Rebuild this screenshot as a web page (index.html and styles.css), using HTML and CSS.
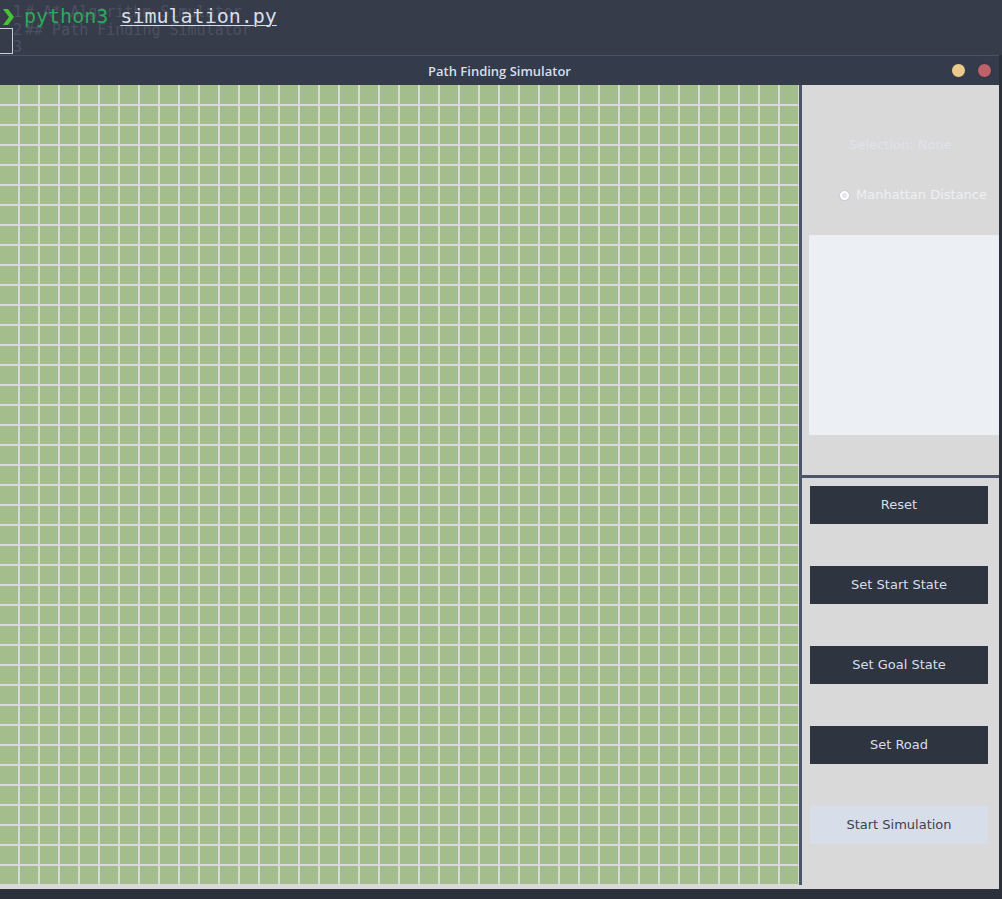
FILE: index.html
```html
<!DOCTYPE html>
<html>
<head>
<meta charset="utf-8">
<title>Path Finding Simulator</title>
<link rel="stylesheet" href="styles.css">
</head>
<body>
<div class="terminal">
  <div class="ghost">
    <div class="gline"><span class="ln">1</span># A* Algorithm Simulator</div>
    <div class="gline"><span class="ln">2</span>## Path Finding Simulator</div>
    <div class="gline"><span class="ln">3</span></div>
  </div>
  <div class="cmd"><svg class="chev" width="24" height="26" viewBox="0 0 24 26"><path d="M3 6 L8 6 L14 14 L8 22 L3 22 L9 14 Z" fill="#49c23a"/></svg><span class="py">python3</span><span class="sp"> </span><span class="file">simulation.py</span></div>
  <div class="cursor"></div>
</div>
<div class="window">
  <div class="titlebar">
    <div></div>
    <div class="title">Path Finding Simulator</div>
    <div class="wbtns"><span class="dot yellow"></span><span class="dot red"></span></div>
  </div>
  <div class="content">
    <div class="grid"></div>
    <div class="side">
      <div class="top-panel">
        <div class="selection">Selection: None</div>
        <div class="radio-row"><span class="radio"><span class="radio-dot"></span></span><span class="radio-label">Manhattan Distance</span></div>
        <div class="listbox"></div>
      </div>
      <div class="bottom-panel">
        <div class="btn">Reset</div>
        <div class="btn">Set Start State</div>
        <div class="btn">Set Goal State</div>
        <div class="btn">Set Road</div>
        <div class="btn btn-light">Start Simulation</div>
      </div>
    </div>
  </div>
</div>
</body>
</html>
```
FILE: styles.css
```css
* { box-sizing: border-box; }
html, body { margin: 0; padding: 0; }
body {
  width: 1002px;
  height: 899px;
  overflow: hidden;
  background: #2b303b;
  font-family: "DejaVu Sans", sans-serif;
}
.terminal {
  position: relative;
  height: 55px;
  background: #363c4a;
}
.ghost {
  position: absolute;
  left: 13px;
  top: 4px;
  font-family: "DejaVu Sans Mono", monospace;
  font-size: 15px;
  line-height: 17.5px;
  color: #4b5162;
}
.gline { height: 17.5px; white-space: pre; }
.ln { display: inline-block; width: 12px; }
.cmd {
  position: relative;
  display: flex;
  align-items: flex-start;
  padding-top: 3px;
  font-family: "DejaVu Sans Mono", monospace;
  font-size: 20px;
  line-height: 26px;
  white-space: pre;
}
.chev { display: block; flex: none; }
.py { color: #2ea85a; }
.file {
  color: #d8dee9;
  text-decoration: underline;
  text-decoration-thickness: 1px;
  text-underline-offset: 2px;
}
.cursor {
  position: absolute;
  left: -1px;
  top: 28px;
  width: 14px;
  height: 26px;
  border: 1px solid #c9ced8;
}
.window {
  width: 999px;
  background: #d9d9d9;
}
.titlebar {
  height: 30px;
  border-top: 1px solid #495061;
  background: #343b4a;
  display: grid;
  grid-template-columns: 1fr auto 1fr;
  align-items: center;
}
.title {
  font-family: "Open Sans", sans-serif;
  font-weight: 600;
  font-size: 13px;
  color: #d8dee9;
}
.wbtns {
  display: flex;
  justify-content: flex-end;
  gap: 11px;
  padding-right: 7px;
}
.dot {
  width: 15px;
  height: 15px;
  border-radius: 50%;
  border: 1px solid #2b303b;
}
.yellow { background: #ebcb8b; }
.red { background: #bf616a; }
.content {
  display: flex;
  padding-bottom: 4px;
}
.grid {
  flex: none;
  width: 802px;
  height: 800px;
  border-right: 3px solid #4c566a;
  background-color: #a3be8c;
  background-image:
    linear-gradient(to right, transparent 18px, #d9d9d9 18px),
    linear-gradient(#a3be8c, #a3be8c),
    linear-gradient(to bottom, transparent 18px, #d9d9d9 18px);
  background-size: 20px 20px, 100% 1px, 20px 20px;
  background-position: 0 0, 0 0, 0 1px;
  background-repeat: repeat, no-repeat, repeat;
}
.side {
  flex: none;
  width: 197px;
  display: flex;
  flex-direction: column;
}
.top-panel {
  height: 393px;
  border-bottom: 3px solid #4c566a;
  padding-top: 52px;
  font-size: 13px;
}
.selection {
  text-align: center;
  line-height: 16px;
  color: #dfe3ea;
}
.radio-row {
  margin-top: 34px;
  height: 16px;
  display: flex;
  align-items: center;
  padding-left: 37px;
  color: #edf0f4;
  line-height: 16px;
}
.radio {
  width: 11px;
  height: 11px;
  border-radius: 50%;
  background: #ffffff;
  border: 1px solid #c7c9cc;
  display: flex;
  align-items: center;
  justify-content: center;
  margin-right: 6px;
}
.radio-dot {
  width: 5px;
  height: 5px;
  border-radius: 50%;
  background: #e3e6ee;
}
.listbox {
  margin-top: 32px;
  margin-left: 7px;
  width: 190px;
  height: 200px;
  background: #eceff4;
}
.bottom-panel {
  padding: 8px 0 0 8px;
  display: flex;
  flex-direction: column;
  gap: 42px;
}
.btn {
  width: 178px;
  height: 38px;
  padding-bottom: 2px;
  background: #2e3440;
  color: #d8dee9;
  font-size: 13px;
  display: flex;
  align-items: center;
  justify-content: center;
}
.btn-light {
  background: #d8dee9;
  color: #3b4252;
}
```
